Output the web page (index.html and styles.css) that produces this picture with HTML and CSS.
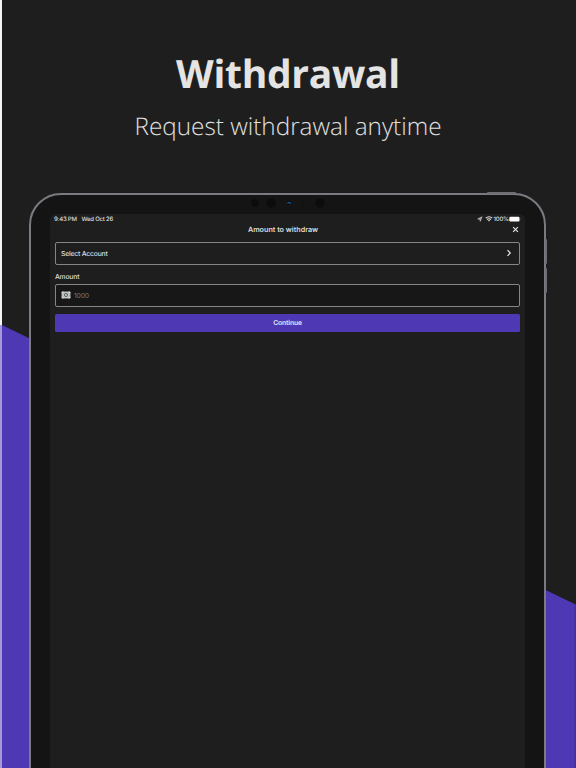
FILE: index.html
```
<!DOCTYPE html>
<html lang="en">
<head>
<meta charset="utf-8">
<title>Withdrawal</title>
<link rel="stylesheet" href="styles.css">
</head>
<body>
<main class="poster">
  <svg class="backdrop" viewBox="0 0 576 768" aria-hidden="true">
    <path d="M0 324.500L2 325L576 604.500V768H0Z" fill="#4f38b3"/>
    <path d="M60 190H576V604.500L545 589.500V340H60Z" fill="#1e1e1e"/>
    <path d="M0 0H2V325H0Z" fill="#f4f4f4"/>
    <path d="M0 325H2V768H0Z" fill="#a699d9"/>
    <path d="M574.500 604V768H576V605Z" fill="#44309a"/>
  </svg>
  <header class="hero">
    <h1>Withdrawal</h1>
    <p>Request withdrawal anytime</p>
  </header>
  <section class="tablet">
    <span class="power"></span>
    <span class="volume up"></span>
    <span class="volume down"></span>
    <svg class="sensors" viewBox="0 0 80 14" aria-hidden="true">
      <circle cx="5" cy="7" r="3.700" fill="#0b0c0c"/>
      <circle cx="21.300" cy="7" r="4.600" fill="#0b0c0c"/>
      <circle cx="39" cy="7" r="2.400" fill="#0b1018"/>
      <path d="M37 7.500q1-1.800 2-.7t2 0" fill="none" stroke="#1f70b8" stroke-width="1"/>
      <circle cx="53.500" cy="7" r="1" fill="#0d0e0e"/>
      <circle cx="70" cy="7" r="4.600" fill="#0b0c0c"/>
    </svg>
    <div class="screen">
      <div class="status">
        <span class="time">9:43 PM</span><span class="date">Wed Oct 26</span>
        <svg class="location" viewBox="0 0 6 6" aria-hidden="true"><path d="M.7 3L5.100.8 3.200 5.300 2.900 3.100Z" fill="#888" stroke="#ddd" stroke-width=".6"/></svg>
        <svg class="wifi" viewBox="0 0 8 6" aria-hidden="true"><path d="M.7 2.100Q4-.7 7.300 2.100M2 3.500Q4 1.900 6 3.500" fill="none" stroke="#e8e8e8" stroke-width="1.100"/><path d="M2.900 4.300Q4 3.500 5.100 4.300L4 5.600Z" fill="#e8e8e8"/></svg>
        <span class="percent">100%</span>
        <svg class="battery" viewBox="0 0 12 6" aria-hidden="true"><rect x=".3" y=".8" width="10.200" height="4.600" rx="1.200" fill="#fff"/><path d="M11 2.200q.8.9 0 1.800Z" fill="#999"/></svg>
      </div>
      <div class="title">
        <h2>Amount to withdraw</h2>
        <svg class="close" viewBox="0 0 7 7" aria-hidden="true"><path d="M1.100 1.100L5.900 5.900M5.900 1.100L1.100 5.900" stroke="#e8e8e8" stroke-width="1.100"/></svg>
      </div>
      <div class="field account">
        <span>Select Account</span>
        <svg class="chevron" viewBox="0 0 6 8" aria-hidden="true"><path d="M1.500 1.200L4.300 4 1.500 6.800" fill="none" stroke="#e4e4e4" stroke-width="1.200"/></svg>
      </div>
      <div class="label">Amount</div>
      <div class="field amount">
        <svg class="cash" viewBox="0 0 10 8" aria-hidden="true">
          <rect x=".5" y=".5" width="9" height="7" rx="1" fill="#b4b4b4"/>
          <path d="M.8.8H3L.8 2.600ZM9.200.8H7L9.200 2.600ZM.8 7.200H3L.8 5.400ZM9.200 7.200H7L9.200 5.400Z" fill="#ececec"/>
          <circle cx="5" cy="4" r="2.400" fill="#484848" stroke="#ececec" stroke-width=".8"/>
          <circle cx="5" cy="4" r="1" fill="#ddd"/>
        </svg>
        <span>1000</span>
      </div>
      <div class="button">Continue</div>
    </div>
  </section>
</main>
</body>
</html>
```
FILE: styles.css
```
* { box-sizing: border-box; }
body { margin: 0; background: #1e1e1e; }
svg { display: block; flex: none; }
.poster {
  position: relative;
  width: 576px;
  height: 768px;
  overflow: hidden;
  background: #1e1e1e;
  font-family: Inter, sans-serif;
  color: #dedede;
  text-rendering: geometricPrecision;
}
.backdrop { position: absolute; inset: 0; width: 576px; height: 768px; }
.hero {
  position: relative;
  height: 193px;
  padding-top: 47px;
  text-align: center;
  font-family: "Open Sans", sans-serif;
}
.hero h1 { margin: 0; font-size: 39px; line-height: 54px; font-weight: 700; letter-spacing: -.3px; color: #e4e4e4; }
.hero p { margin: 8px 0 0; font-size: 24.300px; line-height: 36px; font-weight: 300; color: #e0e0e0; }
.tablet {
  position: relative;
  width: 517px;
  height: 640px;
  margin-left: 29px;
  padding: 18.500px 19.500px 0 19px;
  border: 2px solid #7b7a80;
  border-radius: 32px;
  background: #141414;
}
.power, .volume { position: absolute; background: #6f6e74; }
.power { top: -3px; right: 28px; width: 29px; height: 2px; border-radius: 1px 1px 0 0; }
.volume { right: -3px; width: 2px; height: 25px; border-radius: 0 1px 1px 0; }
.up { top: 44px; }
.down { top: 73px; }
.sensors { position: absolute; left: 219px; top: 1px; width: 80px; height: 14px; }
.screen {
  height: 600px;
  padding: 2px 4.500px 0 5px;
  border-radius: 6px 6px 0 0;
  background: #1e1e1e;
}
.status {
  display: flex;
  align-items: center;
  height: 7px;
  font-size: 6px;
  line-height: 7px;
  font-weight: 500;
  letter-spacing: -.22px;
}
.status span { padding-top: 1px; }
.time { width: 26px; margin-left: -1px; white-space: nowrap; }
.date { flex: 1; margin-left: 1.500px; }
.location { width: 6px; height: 6px; margin-right: 1.500px; }
.wifi { width: 8px; height: 6px; margin-right: 1px; }
.percent { width: 15.500px; white-space: nowrap; }
.battery { width: 12px; height: 6px; margin-right: -1px; }
.title { display: flex; align-items: center; height: 14px; padding-right: 1px; }
.title h2 { flex: 1; margin: 0; padding-right: 1px; text-align: center; font-size: 7.200px; font-weight: 600; }
.close { width: 7px; height: 7px; }
.field {
  display: flex;
  align-items: center;
  height: 23px;
  border: 1px solid #858585;
  border-radius: 2px;
  font-size: 6.800px;
  letter-spacing: -.2px;
}
.field span { padding-top: 1px; }
.account { justify-content: space-between; margin-top: 5px; padding: 0 7px 0 5px; font-weight: 500; }
.chevron { width: 6px; height: 8px; }
.label { height: 19px; padding-top: 7px; font-size: 6.800px; line-height: 9px; font-weight: 500; letter-spacing: -.2px; }
.amount { background: #171717; padding-left: 5px; color: #777; }
.cash { width: 10px; height: 8px; margin-right: 3px; }
.button {
  height: 18.500px;
  margin-top: 7px;
  border-radius: 1.500px;
  background: #4f38b3;
  text-align: center;
  font-size: 6.800px;
  line-height: 18.500px;
  font-weight: 600;
  letter-spacing: -.15px;
  color: #e6e2f6;
}
```
